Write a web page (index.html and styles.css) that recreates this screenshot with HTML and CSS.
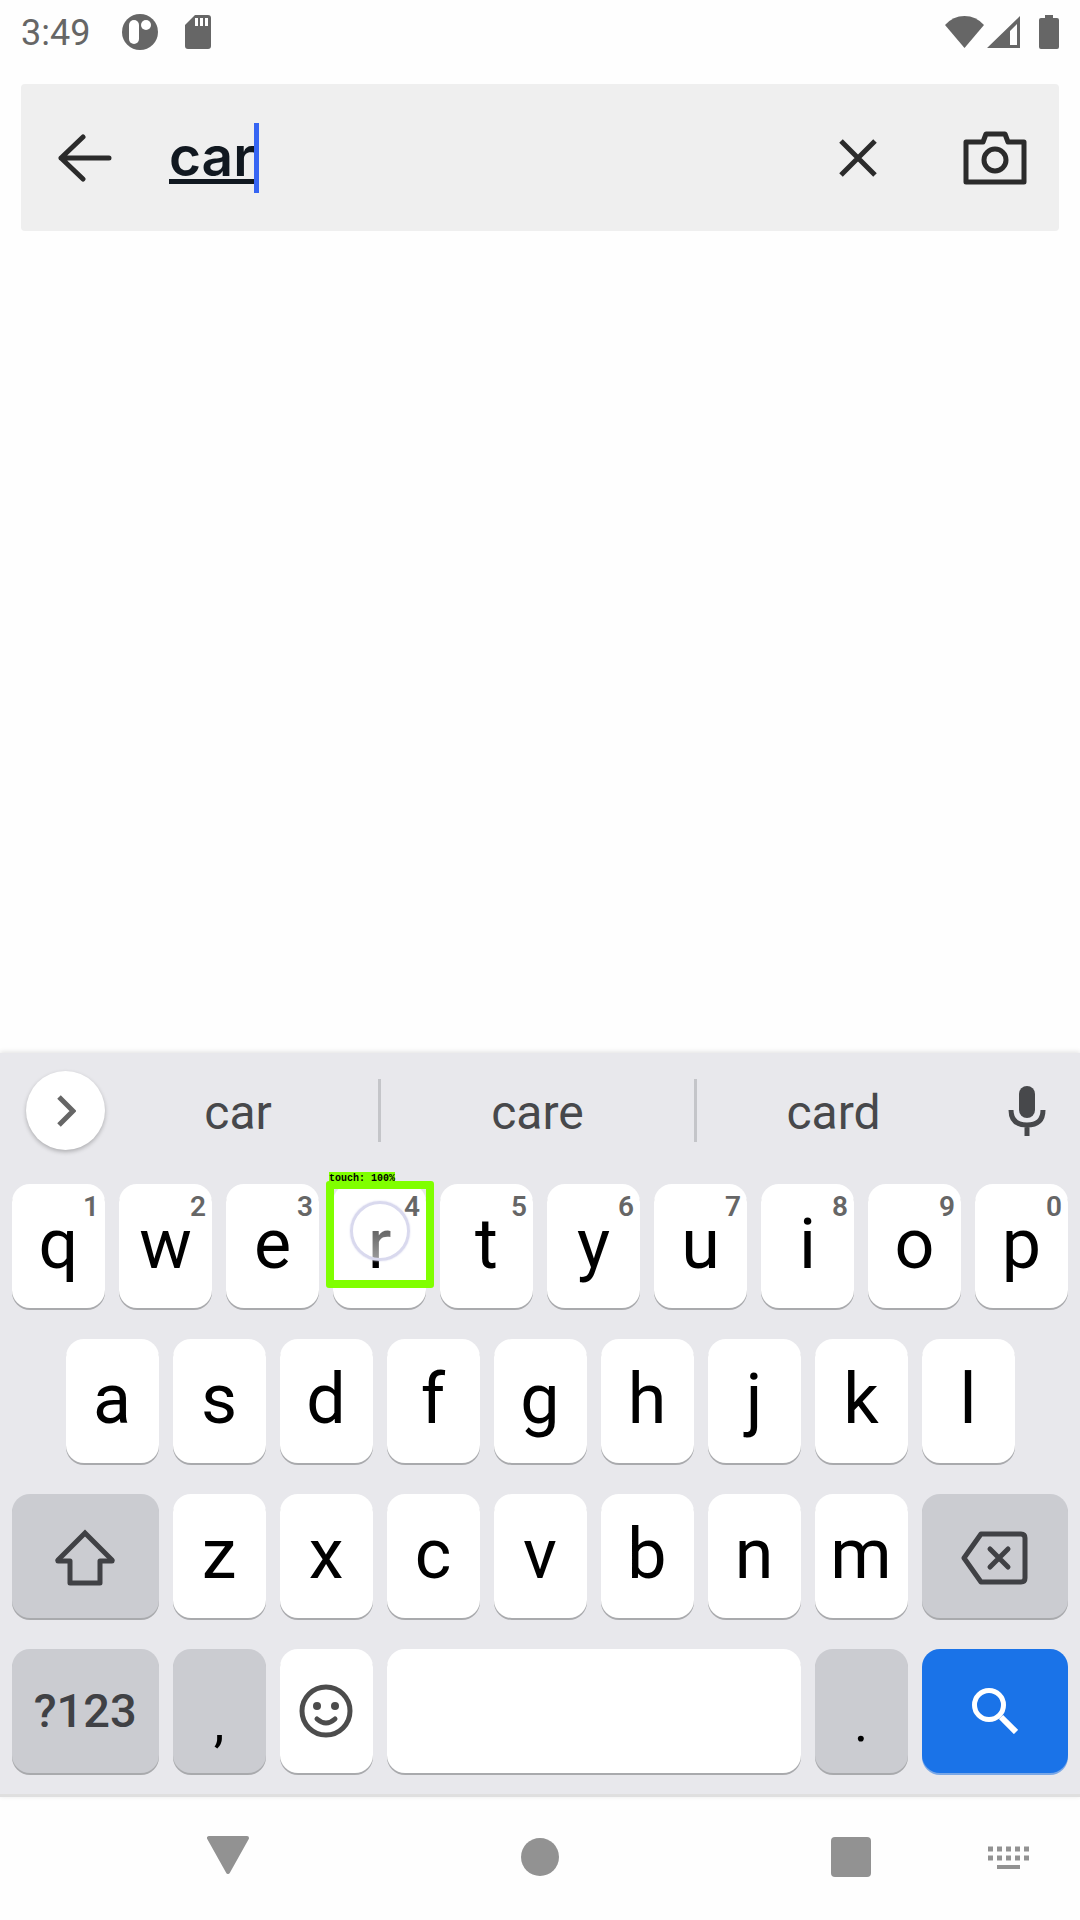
FILE: index.html
```html
<!DOCTYPE html>
<html lang="en">
<head>
<meta charset="utf-8">
<meta name="viewport" content="width=device-width, initial-scale=1">
<title>Search</title>
<link rel="stylesheet" href="styles.css">
</head>
<body>
<header class="status">
  <span class="time">3:49</span>
  <svg class="status-app" width="36" height="36" viewBox="0 0 36 36"><circle cx="18" cy="18" r="18" fill="#666"/><rect x="7" y="6" width="10" height="24" rx="5" fill="#fff"/><circle cx="24" cy="11" r="5" fill="#fff"/></svg>
  <svg class="status-sd" width="26" height="34" viewBox="0 0 26 34"><path d="M10 0H23Q26 0 26 3V31Q26 34 23 34H3Q0 34 0 31V10Z" fill="#666"/><path d="M10 3h3v8h-3zM15 3h3v8h-3zM20 3h3v8h-3z" fill="#fff"/></svg>
  <span class="status-space"></span>
  <svg class="status-wifi" width="39" height="32" viewBox="0 0 39 32"><path d="M0 9Q8 0 19.500 0T39 9L19.500 32Z" fill="#666"/></svg>
  <svg class="status-signal" width="33" height="32" viewBox="0 0 33 32"><path fill-rule="evenodd" d="M33 0V32H0ZM30 8L23 15V29H30Z" fill="#666"/></svg>
  <svg class="status-battery" width="20" height="34" viewBox="0 0 20 34"><path d="M6 0H14V3H18Q20 3 20 5V32Q20 34 18 34H2Q0 34 0 32V5Q0 3 2 3H6Z" fill="#666"/></svg>
</header>

<form class="search" role="search">
  <button class="icon-btn back" type="button" aria-label="Back"><svg width="54" height="48" viewBox="0 0 54 48" fill="none" stroke="#2b2b2b" stroke-width="5" stroke-linecap="round" stroke-linejoin="round"><path d="M25 3L3 24L25 45M3 24H51"/></svg></button>
  <div class="field">
    <input class="query" type="text" value="car" aria-label="Search" autocomplete="off" spellcheck="false">
    <span class="caret"></span>
  </div>
  <button class="icon-btn" type="button" aria-label="Clear"><svg width="38" height="38" viewBox="0 0 38 38" fill="none" stroke="#2b2b2b" stroke-width="5"><path d="M2 2L36 36M36 2L2 36"/></svg></button>
  <button class="icon-btn camera" type="button" aria-label="Search by image"><svg width="64" height="54" viewBox="0 0 64 54" fill="none" stroke="#2b2b2b" stroke-width="5" stroke-linejoin="round"><path d="M3 11H20L23 3H42L45 11H61V51H3Z"/><circle cx="32" cy="29" r="11"/></svg></button>
</form>

<main class="results"></main>

<section class="keyboard" aria-label="Keyboard">
  <div class="strip">
    <div class="more"><button class="more-btn" type="button" aria-label="More"><svg width="20" height="32" viewBox="0 0 20 32" fill="none" stroke="#666" stroke-width="5"><path d="M3 2L17 16L3 30"/></svg></button></div>
    <button class="word" type="button">car</button>
    <button class="word split" type="button">care</button>
    <button class="word split" type="button">card</button>
    <button class="mic" type="button" aria-label="Voice input"><svg width="38" height="50" viewBox="0 0 38 50"><rect x="11" y="0" width="16" height="32" rx="8" fill="#47484b"/><path d="M3 24Q3 39 19 39T35 24M19 39V50" fill="none" stroke="#47484b" stroke-width="5"/></svg></button>
  </div>
  <div class="keys">
    <button class="key" type="button">q<span class="alt">1</span></button>
    <button class="key" type="button">w<span class="alt">2</span></button>
    <button class="key" type="button">e<span class="alt">3</span></button>
    <button class="key touched" type="button">r<span class="alt">4</span><span class="ripple"></span><span class="touch-box"><span class="touch-label">touch: 100%</span></span></button>
    <button class="key" type="button">t<span class="alt">5</span></button>
    <button class="key" type="button">y<span class="alt">6</span></button>
    <button class="key" type="button">u<span class="alt">7</span></button>
    <button class="key" type="button">i<span class="alt">8</span></button>
    <button class="key" type="button">o<span class="alt">9</span></button>
    <button class="key" type="button">p<span class="alt">0</span></button>

    <button class="key indent" type="button">a</button>
    <button class="key" type="button">s</button>
    <button class="key" type="button">d</button>
    <button class="key" type="button">f</button>
    <button class="key" type="button">g</button>
    <button class="key" type="button">h</button>
    <button class="key" type="button">j</button>
    <button class="key" type="button">k</button>
    <button class="key" type="button">l</button>

    <button class="key wide dark edit" type="button" aria-label="Shift"><svg width="60" height="58" viewBox="0 0 60 58" fill="none" stroke="#404145" stroke-width="5" stroke-linejoin="round" stroke-linecap="round"><path stroke-linejoin="miter" d="M3 31L30 4L57 31"/><path d="M3 32H15V54H45V32H57"/></svg></button>
    <button class="key" type="button">z</button>
    <button class="key" type="button">x</button>
    <button class="key" type="button">c</button>
    <button class="key" type="button">v</button>
    <button class="key" type="button">b</button>
    <button class="key" type="button">n</button>
    <button class="key" type="button">m</button>
    <button class="key wide dark edit" type="button" aria-label="Delete"><svg width="68" height="54" viewBox="0 0 68 54" fill="none" stroke="#404145" stroke-width="5" stroke-linejoin="round" stroke-linecap="round"><path d="M20 3H60Q64 3 64 7V47Q64 51 60 51H20L3 27Z"/><path d="M29 18L47 36M47 18L29 36"/></svg></button>

    <button class="key wide dark symbols" type="button">?123</button>
    <button class="key dark punct" type="button">,</button>
    <button class="key icon-key" type="button" aria-label="Emoji"><svg width="54" height="54" viewBox="0 0 54 54"><circle cx="27" cy="27" r="24" fill="none" stroke="#4c4c4c" stroke-width="5"/><circle cx="18" cy="22" r="4" fill="#4c4c4c"/><circle cx="36" cy="22" r="4" fill="#4c4c4c"/><path d="M18 35Q27 43 36 35" fill="none" stroke="#4c4c4c" stroke-width="5" stroke-linecap="round"/></svg></button>
    <button class="key space" type="button" aria-label="Space"></button>
    <button class="key dark punct" type="button">.</button>
    <button class="key wide go icon-key" type="button" aria-label="Search"><svg width="46" height="46" viewBox="0 0 46 46" fill="none" stroke="#fff"><circle cx="17" cy="17" r="14.500" stroke-width="5"/><path d="M29 29L44 44" stroke-width="6"/></svg></button>
  </div>
</section>

<nav class="nav">
  <button class="nav-btn" type="button" aria-label="Hide keyboard"><svg width="42" height="42" viewBox="0 0 42 42"><path d="M2 2H40L21 36Z" fill="#929292" stroke="#929292" stroke-width="4" stroke-linejoin="round"/></svg></button>
  <button class="nav-btn" type="button" aria-label="Home"><svg width="38" height="38" viewBox="0 0 38 38"><circle cx="19" cy="19" r="19" fill="#929292"/></svg></button>
  <button class="nav-btn" type="button" aria-label="Recent apps"><svg width="40" height="40" viewBox="0 0 40 40"><rect width="40" height="40" rx="4" fill="#929292"/></svg></button>
  <button class="nav-btn" type="button" aria-label="Choose keyboard"><svg width="41" height="23" viewBox="0 0 41 23" fill="none" stroke="#929292" stroke-width="5"><path d="M0 3H41M0 12H41" stroke-dasharray="5 4"/><path d="M9 21H32" stroke-width="4"/></svg></button>
</nav>
</body>
</html>
```
FILE: styles.css
```css
* {
  box-sizing: border-box;
}

body {
  margin: 0;
  min-height: 100vh;
  display: flex;
  flex-direction: column;
  background: #fefefe;
  font-family: Roboto, "Liberation Sans", sans-serif;
}

button {
  margin: 0;
  padding: 0;
  border: 0;
  background: none;
  font: inherit;
  color: inherit;
  display: flex;
  align-items: center;
  justify-content: center;
}

svg {
  display: block;
  flex: none;
}

/* Status bar */
.status {
  display: flex;
  align-items: center;
  height: 64px;
  padding: 0 21px;
}

.time {
  padding-top: 2px;
  font-size: 36px;
  line-height: 40px;
  color: #666;
}

.status-app {
  margin-left: 32px;
}

.status-sd {
  margin-left: 27px;
}

.status-space {
  flex: 1;
}

.status-signal {
  margin-left: 3px;
}

.status-battery {
  margin-left: 19px;
}

/* Search bar */
.search {
  display: flex;
  align-items: center;
  height: 147px;
  margin: 20px 21px 0;
  background: #efefef;
  border-radius: 4px;
}

.icon-btn {
  width: 128px;
  height: 128px;
}

.camera {
  margin-left: 9px;
}

.field {
  position: relative;
  flex: 1;
  margin-left: 20px;
}

.query {
  display: block;
  width: 100%;
  height: 70px;
  padding: 0 0 4px;
  border: 0;
  outline: 0;
  background: none;
  font-family: Inter, "Liberation Sans", sans-serif;
  font-size: 55px;
  font-weight: 600;
  color: #111820;
  caret-color: transparent;
  text-decoration: underline;
  text-decoration-thickness: 5px;
  text-decoration-skip-ink: none;
  text-underline-offset: 3px;
}

.caret {
  position: absolute;
  left: 85px;
  top: 0;
  width: 5px;
  height: 70px;
  background: #3665f3;
}

.results {
  flex: 1;
}

/* Keyboard */
.keyboard {
  background: #e8e8ec;
  border-bottom: 3px solid #dfdfdf;
  box-shadow: 0 -1px 5px rgba(0, 0, 0, 0.12);
}

.strip {
  display: grid;
  grid-template-columns: 98px 280px 1fr 276px 110px;
  align-items: center;
  height: 115px;
}

.more {
  padding-left: 26px;
}

.more-btn {
  width: 79px;
  height: 79px;
  border-radius: 50%;
  background: #fff;
  box-shadow: 0 2px 4px rgba(0, 0, 0, 0.25);
}

.word {
  height: 63px;
  padding-top: 4px;
  font-size: 48px;
  color: #47484b;
}

.split {
  border-left: 3px solid #c4c5c9;
}

.mic {
  height: 63px;
  padding-left: 4px;
}

.keys {
  display: grid;
  grid-template-columns: repeat(20, 1fr);
  grid-auto-rows: 124px;
  gap: 31px 14px;
  padding: 16px 12px 21px;
}

.key {
  position: relative;
  grid-column: span 2;
  padding-bottom: 4px;
  border-radius: 18px;
  background: #fff;
  box-shadow: 0 2px 0 #a9aaad;
  font-size: 70px;
  line-height: 80px;
  color: #000;
}

.icon-key {
  padding-bottom: 0;
}

.edit {
  padding: 4px 0 0;
}

.indent {
  grid-column: 2 / span 2;
}

.wide {
  grid-column: span 3;
}

.space {
  grid-column: span 8;
}

.dark {
  background: #cbccd1;
}

.symbols {
  padding: 0;
  font-size: 47px;
  font-weight: 500;
  color: #404145;
}

.punct {
  padding: 24px 0 0;
  font-size: 54px;
}

.go {
  background: #1a73e8;
  box-shadow: 0 2px 0 #79a7e6;
}

.alt {
  position: absolute;
  top: 6px;
  right: 6px;
  font-size: 28px;
  line-height: 34px;
  font-weight: 600;
  color: #666;
}

/* Touch indicator over the pressed key */
.touched {
  z-index: 1;
}

.ripple {
  position: absolute;
  left: 17px;
  top: 17px;
  width: 60px;
  height: 60px;
  border: 3px solid #d9d9ee;
  border-radius: 50%;
  background: linear-gradient(rgba(255, 255, 255, 0.4), rgba(255, 255, 255, 0.4) 50%, rgba(255, 255, 255, 0.6));
  box-shadow: 0 0 2px #d9d9ee;
}

.touch-box {
  position: absolute;
  inset: -3px -8px 20px -7px;
  border: 8px solid #80ff00;
  border-radius: 3px;
}

.touch-label {
  position: absolute;
  left: -5px;
  top: -17px;
  background: #80ff00;
  font-family: "Liberation Mono", monospace;
  font-size: 10px;
  line-height: 14px;
  font-weight: 700;
  white-space: nowrap;
}

/* System navigation */
.nav {
  display: grid;
  grid-template-columns: 170px 1fr 170px 144px;
  align-items: center;
  height: 123px;
  padding: 0 0 3px 143px;
}

.nav-btn {
  height: 96px;
}
```
